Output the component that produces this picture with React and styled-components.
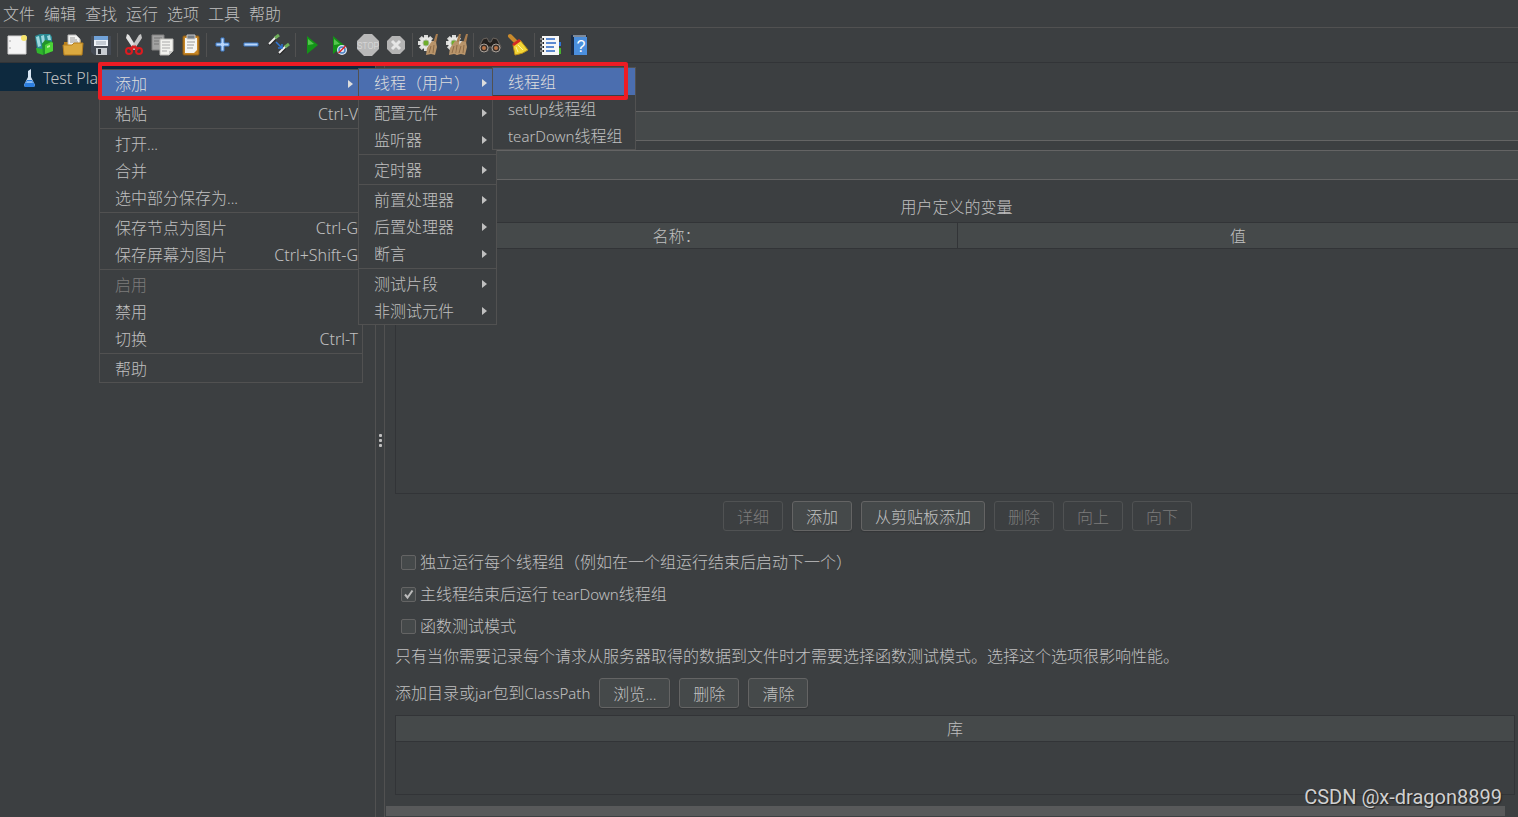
import React from "react";
import styled, { createGlobalStyle, css } from "styled-components";

const color = {
  bg: "#3c3f41",
  field: "#45494a",
  text: "#c0c0c0",
  muted: "#7c7c7c",
  line: "#515151",
  border: "#646464",
  dark: "#323437",
  accent: "#4b6eaf",
  row: "#0d293e",
  red: "#ed1c24",
};

const GlobalStyle = createGlobalStyle`
  *, *::before, *::after { box-sizing: border-box; }
  body {
    margin: 0;
    background: ${color.bg};
    color: ${color.text};
    font: 300 16px/24px "Noto Sans", "Noto Sans CJK SC", sans-serif;
  }
  button, input {
    font: inherit;
    color: inherit;
  }
`;

const Window = styled.div`
  position: relative;
  display: flex;
  flex-direction: column;
  min-height: 100vh;
  overflow: hidden;
`;

const MenuBar = styled.nav`
  display: flex;
  gap: 9px;
  height: 28px;
  padding: 2px 3px;
  border-bottom: 1px solid ${color.line};
`;

const MenuBarButton = styled.button`
  padding: 0;
  border: 0;
  background: none;
  line-height: 24px;
`;

const ToolBar = styled.div`
  display: flex;
  align-items: center;
  height: 35px;
  padding: 0 3px;
  border-bottom: 1px solid ${color.dark};
`;

const ToolGroup = styled.div`
  display: flex;
  & + &::before {
    content: "";
    width: 1px;
    height: 24px;
    margin: 2px;
    background: ${color.line};
  }
`;

const ToolButton = styled.button`
  width: 28px;
  height: 28px;
  padding: 0;
  border: 0;
  background: none;
  svg { display: block; }
`;

const Workspace = styled.div`
  display: flex;
  flex: 1;
`;

const TreePanel = styled.aside`
  flex: 0 0 375px;
`;

const TreeRow = styled.div`
  display: flex;
  align-items: center;
  gap: 4px;
  height: 28px;
  padding: 2px 20px 0;
  background: ${color.row};
`;

const Latin = styled.span`
  font-size: 15px;
`;

const Splitter = styled.div`
  display: flex;
  flex: 0 0 10px;
  flex-direction: column;
  align-items: center;
  justify-content: center;
  gap: 2px;
  border: solid ${color.line};
  border-width: 0 1px;
`;

const Grip = styled.span`
  width: 3px;
  height: 3px;
  border-radius: 1px;
  background: ${color.text};
`;

const Editor = styled.main`
  display: flex;
  flex: 1;
  flex-direction: column;
  min-width: 0;
`;

const Fields = styled.div`
  display: flex;
  flex-direction: column;
  gap: 9px;
  padding: 48px 0 0 60px;
`;

const TextField = styled.input`
  width: 100%;
  height: 30px;
  padding: 0 6px;
  border: solid ${color.border};
  border-width: 1px 0 1px 1px;
  background: ${color.field};
`;

const SectionTitle = styled.h2`
  margin: 15px 0 3px 10px;
  font-size: 16px;
  font-weight: inherit;
  line-height: 24px;
  text-align: center;
`;

const TableFrame = styled.div`
  min-height: ${(p) => p.$height};
  margin-left: 10px;
  margin-right: ${(p) => (p.$inset ? "3px" : "0")};
  border: 1px solid ${color.dark};
  border-right-width: ${(p) => (p.$inset ? "1px" : "0")};
`;

const Table = styled.table`
  width: 100%;
  table-layout: fixed;
  border-collapse: separate;
  border-spacing: 0;
`;

const HeaderCell = styled.th`
  height: 26px;
  padding: 1px 0 0;
  border-bottom: 1px solid ${color.dark};
  background: ${color.field};
  font-weight: inherit;
  text-align: center;
  & + & { border-left: 1px solid ${color.dark}; }
`;

const ButtonRow = styled.div`
  display: flex;
  align-items: center;
  justify-content: ${(p) => (p.$center ? "center" : "flex-start")};
  gap: 9px;
  margin: 7px 0 7px ${(p) => (p.$center ? "12px" : "10px")};
`;

const PushButton = styled.button`
  height: 30px;
  padding: 2px 13px 0;
  border: 1px solid ${color.border};
  border-radius: 3px;
  background: ${color.field};
  box-shadow: 0 1px 1px #333638;
  line-height: 24px;
  white-space: nowrap;
  &:disabled {
    border-color: #505253;
    background: none;
    box-shadow: none;
    color: ${color.muted};
  }
`;

const Options = styled.div`
  padding: 8px 16px 0;
`;

const Option = styled.label`
  display: flex;
  align-items: center;
  gap: 4px;
  height: 32px;
`;

const CheckBox = styled.input`
  appearance: none;
  width: 15px;
  height: 15px;
  margin: 0;
  border: 1px solid ${color.border};
  border-radius: 2px;
  background: ${color.field};
  &:checked {
    background: ${color.field}
      url("data:image/svg+xml,%3Csvg xmlns='http://www.w3.org/2000/svg' viewBox='0 0 13 13'%3E%3Cpath d='M3 6.5 5.5 9.5 10.5 2.5' fill='none' stroke='%23bbb' stroke-width='2'/%3E%3C/svg%3E");
  }
`;

const Note = styled.p`
  margin: 0 0 1px 10px;
  line-height: 28px;
`;

const PathLabel = styled.span`
  white-space: nowrap;
`;

const ScrollTrack = styled.div`
  margin-top: auto;
  padding: 11px 13px 1px 1px;
`;

const ScrollThumb = styled.div`
  height: 10px;
  background: #58595a;
`;

const Popup = styled.div`
  position: absolute;
  z-index: 2;
  left: ${(p) => p.$left}px;
  top: ${(p) => p.$top}px;
  width: ${(p) => p.$width}px;
  border: 1px solid ${color.line};
  background: ${color.bg};
`;

const PopupEntry = styled.div`
  position: relative;
`;

const PopupButton = styled.button`
  display: flex;
  align-items: center;
  justify-content: space-between;
  width: 100%;
  height: 27px;
  padding: 0 4px 0 15px;
  border: 0;
  background: none;
  line-height: 24px;
  text-align: left;
  white-space: nowrap;
  ${(p) => p.$active && css`
    background: ${color.accent};
    color: #dddddd;
  `}
  &:disabled { color: ${color.muted}; }
`;

const PopupRule = styled.hr`
  height: 1px;
  margin: 1px 0;
  border: 0;
  background: ${color.line};
`;

const Arrow = styled.span`
  margin-right: 5px;
  border: solid transparent;
  border-width: 4px 0 4px 5px;
  border-left-color: currentColor;
`;

const Highlight = styled.div`
  position: absolute;
  z-index: 3;
  left: 98px;
  top: 62px;
  width: 530px;
  height: 38px;
  border: 4px solid ${color.red};
  border-radius: 2px;
  pointer-events: none;
`;

const Watermark = styled.div`
  position: absolute;
  right: 16px;
  bottom: 8px;
  color: #d0d0d0;
  font: 400 20px/24px Roboto, sans-serif;
  text-shadow: 1px 1px 1px #222222;
`;

const gearTeeth = [0, 45, 90, 135, 180, 225, 270, 315];

const Gear = () => (
  <g transform="translate(11 12)">
    {gearTeeth.map((a) => (
      <rect key={a} x="-2" y="-8" width="4" height="4" fill="#dcdcda" transform={`rotate(${a})`} />
    ))}
    <circle r="6" fill="#e8e8e6" />
    <circle r="3" fill="#6fae2c" stroke="#a9b99a" />
  </g>
);

const Brush = ({ x = 0 }) => (
  <g transform={`translate(${x} 0)`}>
    <path d="M21 3 23 3 21 12 18 12Z" fill="#a87d50" />
    <path d="M17 10 21 11 22 16 20 24 16 23 11 24 12 17Z" fill="#b8946a" />
    <path d="M16 15 14 22M19 14 18 22" stroke="#8d6b47" />
  </g>
);

const Pipette = ({ x, y }) => (
  <g transform={`translate(${x} ${y})`}>
    <path d="M1 11 7 5" stroke="#252525" strokeWidth="3" />
    <path d="M1 10 8 3" stroke="#f0f0f0" strokeWidth="2" />
    <path d="M7 4 11 1" stroke="#6fae5a" strokeWidth="3" />
  </g>
);

const icons = {
  create: (
    <>
      <path d="M5 5H23V23H5Z" fill="#f5f5f5" stroke="#d4d4d4" />
      <path d="M7 9v2M7 16v2" stroke="#aaa" />
      <circle cx="21" cy="7" r="3" fill="#f6e46c" />
    </>
  ),
  templates: (
    <>
      <path d="M4 5 9 3 19 3 21 6 21 12 12 20 6 18Z" fill="#2b8a93" />
      <path d="M5 6 8 5 10 15 7 16ZM10 5 13 4 14 11 11 12ZM16 5 19 4 20 9H17Z" fill="#9ed9df" />
      <path d="M5 17 12 18V24L6 22Z" fill="#2fb52c" />
      <path d="M11 13 14 9 22 11V20L12 24Z" fill="#22952a" />
      <path d="M14 14 20 11 22 12V20L14 23Z" fill="#4bd337" />
      <path d="M16 15 19 14V16L16 17Z" fill="#b4f59a" />
    </>
  ),
  open: (
    <>
      <path d="M5 11H11L13 9H22V22H5Z" fill="#b9801b" />
      <path d="M9 4H17L21 8V16H9Z" fill="#f4f4f2" stroke="#bbb" />
      <path d="M11 7h5M11 9h7M11 11h8" stroke="#999" />
      <path d="M4 14H13L15 12H24L23 24H5Z" fill="#dba93f" stroke="#b57f1d" />
    </>
  ),
  save: (
    <>
      <path d="M4 5H24V24H7L4 21Z" fill="#454b55" />
      <path d="M7 5H21V15H7Z" fill="#eef2f8" />
      <path d="M7 5H21V9H7Z" fill="#71a2d8" />
      <path d="M9 11h10M9 13h10" stroke="#9aa3af" />
      <path d="M9 17H20V24H9Z" fill="#c9cdd2" />
      <path d="M11 18H14V23H11Z" fill="#30343a" />
    </>
  ),
  cut: (
    <>
      <path d="M7 3 9 4 17 17 14 19 6 7Z" fill="#e2e2e2" />
      <path d="M21 3 22 7 14 19 11 17 19 4Z" fill="#c4c4c4" />
      <path d="m14 15-4 4M14 15l4 4" stroke="#d91f1f" strokeWidth="3" />
      <circle cx="9" cy="20" r="3" fill="none" stroke="#dc1b20" strokeWidth="2" />
      <circle cx="19" cy="20" r="3" fill="none" stroke="#dc1b20" strokeWidth="2" />
    </>
  ),
  copy: (
    <>
      <path d="M4 4H16V19H4Z" fill="#a2a2a2" stroke="#808080" />
      <path d="M6 7h8M6 10h5M6 13h5" stroke="#777" />
      <path d="M12 8H25V20L21 24H12Z" fill="#f2f2ee" stroke="#b8b8b5" />
      <path d="M14 11h8M14 14h8M14 17h8M14 20h5" stroke="#aaa" />
      <path d="M21 24V20H25" fill="#c9c9c7" />
    </>
  ),
  paste: (
    <>
      <rect x="7" y="5" width="16" height="19" rx="1" fill="#c68524" stroke="#8e5c14" />
      <path d="M9 7H21V19L18 22H9Z" fill="#f5f5f2" />
      <path d="M11 11h8M11 14h7M11 17h6" stroke="#9b9b9b" />
      <path d="M11 4H19V8H11Z" fill="#777d84" stroke="#c5c7c9" />
    </>
  ),
  plus: <path d="M12 7h3v5h5v3h-5v5h-3v-5H7v-3h5Z" fill="#b9d6fa" stroke="#3f7cc9" />,
  minus: <path d="M7 12H21V15H7Z" fill="#b9d6fa" stroke="#3f7cc9" />,
  toggle: (
    <>
      <Pipette x={3} y={3} />
      <Pipette x={13} y={12} />
      <path d="M11 11 17 17M17 13V17H13" fill="none" stroke="#2e76d6" strokeWidth="1.5" />
    </>
  ),
  run: (
    <>
      <path d="M9 5 20 14 9 23Z" fill="#149318" />
      <path d="M10 8 16 13 10 14Z" fill="#55c64e" />
    </>
  ),
  runNow: (
    <>
      <path d="M7 5 18 14 7 23Z" fill="#149318" />
      <path d="M8 8 14 13 8 14Z" fill="#55c64e" />
      <circle cx="16" cy="19" r="5" fill="#dfe8f5" />
      <circle cx="16" cy="19" r="3" fill="none" stroke="#4c83c5" strokeWidth="1.5" />
      <path d="m12.5 22 7-7" stroke="#d22" strokeWidth="1.5" />
    </>
  ),
  stop: (
    <>
      <path d="M10 3H18L25 10V18L18 25H10L3 18V10Z" fill="#b9b9b9" />
      <text x="14" y="18" textAnchor="middle" fontFamily="Roboto, sans-serif" fontSize="9" fill="#dedede">STOP</text>
    </>
  ),
  shutdown: (
    <>
      <path d="M10 5H18L23 10V18L18 23H10L5 18V10Z" fill="#b4b4b4" />
      <path d="m10 10 8 8m0-8-8 8" stroke="#e6e6e6" strokeWidth="3" />
    </>
  ),
  clear: (
    <>
      <Gear />
      <Brush />
    </>
  ),
  clearAll: (
    <>
      <Gear />
      <Brush x={-5} />
      <Brush x={2} />
    </>
  ),
  search: (
    <>
      <path d="M7 8 11 7 13 11H15L17 7 21 8 25 16 22 20H16V16H12V20H6L3 16Z" fill="#24211f" stroke="#6b645e" />
      <circle cx="8" cy="17" r="4" fill="#39302b" stroke="#a9a19a" />
      <circle cx="20" cy="17" r="4" fill="#39302b" stroke="#a9a19a" />
      <circle cx="8" cy="17" r="2" fill="#bb7447" />
      <circle cx="20" cy="17" r="2" fill="#bb7447" />
    </>
  ),
  sweep: (
    <>
      <path d="M6 5 12 11" stroke="#c98a2c" strokeWidth="4" strokeLinecap="round" />
      <path d="M9 14 16 9 24 19Q19 23 11 24Z" fill="#f2d535" stroke="#b98f18" />
      <path d="M8 13 15 8 17 10 10 15Z" fill="#d42a24" />
      <path d="m12 16 2 5m0-7 5 5" stroke="#fff29a" />
    </>
  ),
  functions: (
    <>
      <path d="M20 11H24V15H20Z" fill="#2f73d3" />
      <path d="M20 17H24V23H20Z" fill="#48b12d" />
      <path d="M5 5H22V24H5Z" fill="#f7f7f7" />
      <path d="M9 8h9M9 12h10M9 16h8M9 20h9" stroke="#2a67c5" strokeWidth="1.5" />
      <path d="M3 8h4M3 12h4M3 16h4M3 20h4" stroke="#252525" strokeWidth="2" />
      <path d="M3 8h3M3 12h3M3 16h3M3 20h3" stroke="#e5e5e5" />
    </>
  ),
  help: (
    <>
      <path d="M6 4H22V24H6Z" fill="#1c2c44" />
      <path d="M9 6H22V24H9Z" fill="#4b8fdd" />
      <path d="M8 5H21" stroke="#dfe7ef" />
      <text x="16" y="21" textAnchor="middle" fontFamily="Liberation Sans, sans-serif" fontSize="16" fill="#fff">?</text>
    </>
  ),
};

const toolGroups = [
  ["create", "templates", "open", "save"],
  ["cut", "copy", "paste"],
  ["plus", "minus", "toggle"],
  ["run", "runNow", "stop", "shutdown"],
  ["clear", "clearAll"],
  ["search", "sweep"],
  ["functions", "help"],
];

const Flask = () => (
  <svg width="19" height="22" viewBox="0 0 19 22" aria-hidden="true">
    <path d="M8 4 11 2V10L15 18 14 20H5L4 18 8 10Z" fill="#d7e5f2" />
    <path d="M7 13H12L15 18 14 20H5L4 18Z" fill="#2d7fe0" />
    <path d="M7 14H12L13 16H6Z" fill="#86b9f2" />
  </svg>
);

const threadMenu = [
  { label: "线程组", active: true },
  { label: <><Latin>setUp</Latin>线程组</> },
  { label: <><Latin>tearDown</Latin>线程组</> },
];

const addMenu = [
  { label: "线程（用户）", active: true, arrow: true, popup: { left: 133, top: -2, width: 144, items: threadMenu } },
  null,
  { label: "配置元件", arrow: true },
  { label: "监听器", arrow: true },
  null,
  { label: "定时器", arrow: true },
  null,
  { label: "前置处理器", arrow: true },
  { label: "后置处理器", arrow: true },
  { label: "断言", arrow: true },
  null,
  { label: "测试片段", arrow: true },
  { label: "非测试元件", arrow: true },
];

const contextMenu = [
  { label: "添加", active: true, arrow: true, popup: { left: 258, top: -2, width: 139, items: addMenu } },
  null,
  { label: "粘贴", keys: "Ctrl-V" },
  null,
  { label: <>打开<Latin>...</Latin></> },
  { label: "合并" },
  { label: <>选中部分保存为<Latin>...</Latin></> },
  null,
  { label: "保存节点为图片", keys: "Ctrl-G" },
  { label: "保存屏幕为图片", keys: "Ctrl+Shift-G" },
  null,
  { label: "启用", disabled: true },
  { label: "禁用" },
  { label: "切换", keys: "Ctrl-T" },
  null,
  { label: "帮助" },
];

function PopupMenu({ left, top, width, items }) {
  return (
    <Popup role="menu" $left={left} $top={top} $width={width}>
      {items.map((item, i) =>
        item === null ? (
          <PopupRule key={i} />
        ) : (
          <PopupEntry key={i}>
            <PopupButton role="menuitem" $active={item.active} disabled={item.disabled}>
              <span>{item.label}</span>
              {item.keys && <span>{item.keys}</span>}
              {item.arrow && <Arrow />}
            </PopupButton>
            {item.popup && <PopupMenu {...item.popup} />}
          </PopupEntry>
        )
      )}
    </Popup>
  );
}

export default function App() {
  return (
    <Window>
      <GlobalStyle />
      <MenuBar>
        {["文件", "编辑", "查找", "运行", "选项", "工具", "帮助"].map((m) => (
          <MenuBarButton key={m}>{m}</MenuBarButton>
        ))}
      </MenuBar>
      <ToolBar>
        {toolGroups.map((group) => (
          <ToolGroup key={group[0]}>
            {group.map((name) => (
              <ToolButton key={name} aria-label={name}>
                <svg width="28" height="28" viewBox="0 0 28 28" fill="none">{icons[name]}</svg>
              </ToolButton>
            ))}
          </ToolGroup>
        ))}
      </ToolBar>
      <Workspace>
        <TreePanel>
          <TreeRow>
            <Flask />
            <span>Test Plan</span>
          </TreeRow>
        </TreePanel>
        <Splitter>
          <Grip />
          <Grip />
          <Grip />
        </Splitter>
        <Editor>
          <Fields>
            <TextField aria-label="名称" />
            <TextField aria-label="注释" />
          </Fields>
          <SectionTitle>用户定义的变量</SectionTitle>
          <TableFrame $height="272px">
            <Table>
              <thead>
                <tr>
                  <HeaderCell>名称：</HeaderCell>
                  <HeaderCell>值</HeaderCell>
                </tr>
              </thead>
            </Table>
          </TableFrame>
          <ButtonRow $center>
            <PushButton disabled>详细</PushButton>
            <PushButton>添加</PushButton>
            <PushButton>从剪贴板添加</PushButton>
            <PushButton disabled>删除</PushButton>
            <PushButton disabled>向上</PushButton>
            <PushButton disabled>向下</PushButton>
          </ButtonRow>
          <Options>
            <Option>
              <CheckBox type="checkbox" />
              <span>独立运行每个线程组（例如在一个组运行结束后启动下一个）</span>
            </Option>
            <Option>
              <CheckBox type="checkbox" defaultChecked />
              <span>主线程结束后运行 <Latin>tearDown</Latin>线程组</span>
            </Option>
            <Option>
              <CheckBox type="checkbox" />
              <span>函数测试模式</span>
            </Option>
          </Options>
          <Note>只有当你需要记录每个请求从服务器取得的数据到文件时才需要选择函数测试模式。选择这个选项很影响性能。</Note>
          <ButtonRow>
            <PathLabel>添加目录或<Latin>jar</Latin>包到<Latin>ClassPath</Latin></PathLabel>
            <PushButton>浏览<Latin>...</Latin></PushButton>
            <PushButton>删除</PushButton>
            <PushButton>清除</PushButton>
          </ButtonRow>
          <TableFrame $height="80px" $inset>
            <Table>
              <thead>
                <tr>
                  <HeaderCell>库</HeaderCell>
                </tr>
              </thead>
            </Table>
          </TableFrame>
          <ScrollTrack>
            <ScrollThumb />
          </ScrollTrack>
        </Editor>
      </Workspace>
      <PopupMenu left={99} top={69} width={264} items={contextMenu} />
      <Highlight />
      <Watermark>CSDN @x-dragon8899</Watermark>
    </Window>
  );
}
